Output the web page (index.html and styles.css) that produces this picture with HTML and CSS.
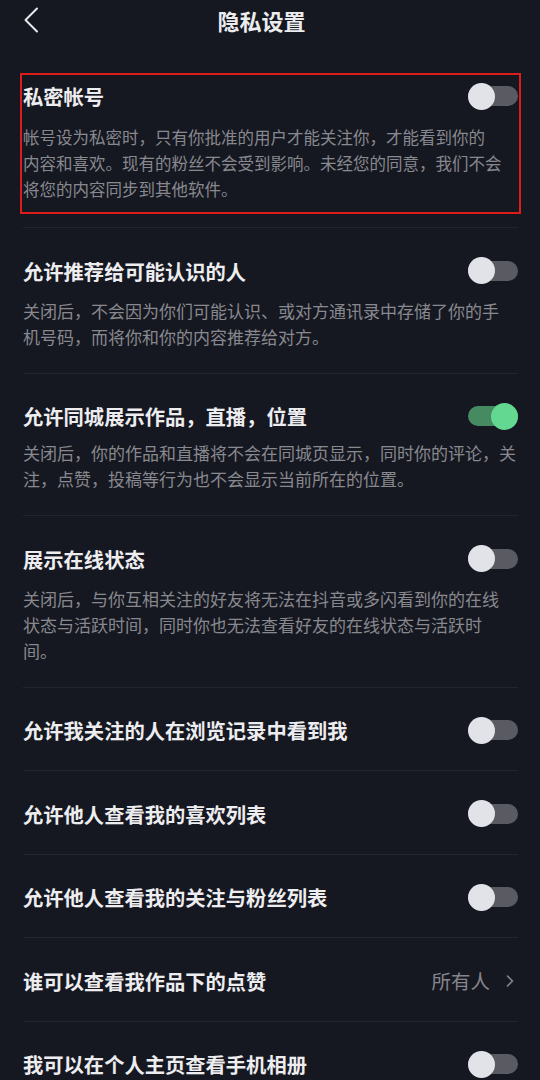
FILE: index.html
```html
<!DOCTYPE html>
<html lang="zh-CN">
<head>
<meta charset="utf-8">
<title>隐私设置</title>
<link rel="stylesheet" href="styles.css">
</head>
<body>
<header class="topbar">
  <button class="back" aria-label="返回">
    <svg width="16" height="26" viewBox="0 0 16 26"><polyline points="14,1.5 2.5,13 14,24.5" fill="none" stroke="#e9e9ec" stroke-width="2" stroke-linecap="round" stroke-linejoin="round"/></svg>
  </button>
  <h1 class="title">隐私设置</h1>
  <span></span>
</header>

<main class="list">
  <section class="highlight">
    <div class="item item-desc first">
      <div class="head">
        <span class="label">私密帐号</span>
        <span class="toggle"><span class="knob"></span></span>
      </div>
      <p class="desc">帐号设为私密时，只有你批准的用户才能关注你，才能看到你的<br>内容和喜欢。现有的粉丝不会受到影响。未经您的同意，我们不会<br>将您的内容同步到其他软件。</p>
    </div>
  </section>

  <div class="item item-desc">
    <div class="head">
      <span class="label">允许推荐给可能认识的人</span>
      <span class="toggle"><span class="knob"></span></span>
    </div>
    <p class="desc">关闭后，不会因为你们可能认识、或对方通讯录中存储了你的手<br>机号码，而将你和你的内容推荐给对方。</p>
  </div>

  <div class="item item-desc">
    <div class="head">
      <span class="label">允许同城展示作品，直播，位置</span>
      <span class="toggle on"><span class="knob"></span></span>
    </div>
    <p class="desc tight">关闭后，你的作品和直播将不会在同城页显示，同时你的评论，关<br>注，点赞，投稿等行为也不会显示当前所在的位置。</p>
  </div>

  <div class="item item-desc">
    <div class="head">
      <span class="label">展示在线状态</span>
      <span class="toggle"><span class="knob"></span></span>
    </div>
    <p class="desc">关闭后，与你互相关注的好友将无法在抖音或多闪看到你的在线<br>状态与活跃时间，同时你也无法查看好友的在线状态与活跃时<br>间。</p>
  </div>

  <div class="item">
    <div class="head">
      <span class="label">允许我关注的人在浏览记录中看到我</span>
      <span class="toggle"><span class="knob"></span></span>
    </div>
  </div>

  <div class="item">
    <div class="head">
      <span class="label">允许他人查看我的喜欢列表</span>
      <span class="toggle"><span class="knob"></span></span>
    </div>
  </div>

  <div class="item">
    <div class="head">
      <span class="label">允许他人查看我的关注与粉丝列表</span>
      <span class="toggle"><span class="knob"></span></span>
    </div>
  </div>

  <div class="item">
    <div class="head">
      <span class="label">谁可以查看我作品下的点赞</span>
      <span class="value">所有人
        <svg width="8" height="12" viewBox="0 0 8 12"><polyline points="1.5,1 6.5,6 1.5,11" fill="none" stroke="#85868c" stroke-width="1.6" stroke-linecap="round" stroke-linejoin="round"/></svg>
      </span>
    </div>
  </div>

  <div class="item">
    <div class="head">
      <span class="label">我可以在个人主页查看手机相册</span>
      <span class="toggle"><span class="knob"></span></span>
    </div>
  </div>
</main>
</body>
</html>
```

FILE: styles.css
```css
* {
  box-sizing: border-box;
}

html, body {
  margin: 0;
  padding: 0;
  background: #161821;
}

body {
  width: 540px;
  height: 1080px;
  overflow: hidden;
  font-family: "Noto Sans CJK SC", "Noto Sans", sans-serif;
  color: #ececef;
}

.topbar {
  display: grid;
  grid-template-columns: 1fr auto 1fr;
  align-items: center;
  height: 40px;
}

.back {
  justify-self: start;
  display: flex;
  align-items: center;
  margin-left: 23px;
  padding: 0;
  border: 0;
  background: none;
  height: 40px;
}

.title {
  margin: 0 17px 0 0;
  font-size: 22px;
  line-height: 40px;
  font-weight: 700;
  color: #ececef;
}

.list {
  margin-top: 33px;
}

.highlight {
  margin: 0 19px 0 20px;
  border: 2px solid #dc1d1c;
  padding: 0 1px;
}

.item {
  margin: 0 22px 0 23px;
  border-top: 1px solid #23252d;
  padding: 28.5px 0 26px;
}

.highlight + .item {
  margin-top: 13px;
}

.item-desc {
  padding-bottom: 23px;
}

.item.first {
  margin: 0;
  border-top: 0;
  padding: 7px 0 10px;
}

.head {
  display: flex;
  align-items: center;
  justify-content: space-between;
  height: 28px;
}

.label {
  font-size: 20.3px;
  line-height: 28px;
  font-weight: 700;
  color: #ededf0;
  white-space: nowrap;
}

.desc {
  margin: 13px 0 0;
  font-size: 17px;
  line-height: 26px;
  color: #88898f;
  white-space: nowrap;
}

.first .desc {
  margin-top: 14px;
  font-size: 16.5px;
}

.desc.tight {
  margin-top: 10px;
}

.toggle {
  position: relative;
  flex: none;
  width: 50px;
  height: 20px;
  border-radius: 10px;
  background: #5a5b62;
}

.toggle .knob {
  position: absolute;
  top: -3.5px;
  left: 0;
  width: 27px;
  height: 27px;
  border-radius: 50%;
  background: #e2e3e8;
}

.toggle.on {
  background: #468a62;
}

.toggle.on .knob {
  left: auto;
  right: 0;
  background: #62d891;
}

.value {
  display: flex;
  align-items: center;
  gap: 16px;
  padding-right: 4px;
  font-size: 19.5px;
  line-height: 28px;
  color: #85868c;
}
```
